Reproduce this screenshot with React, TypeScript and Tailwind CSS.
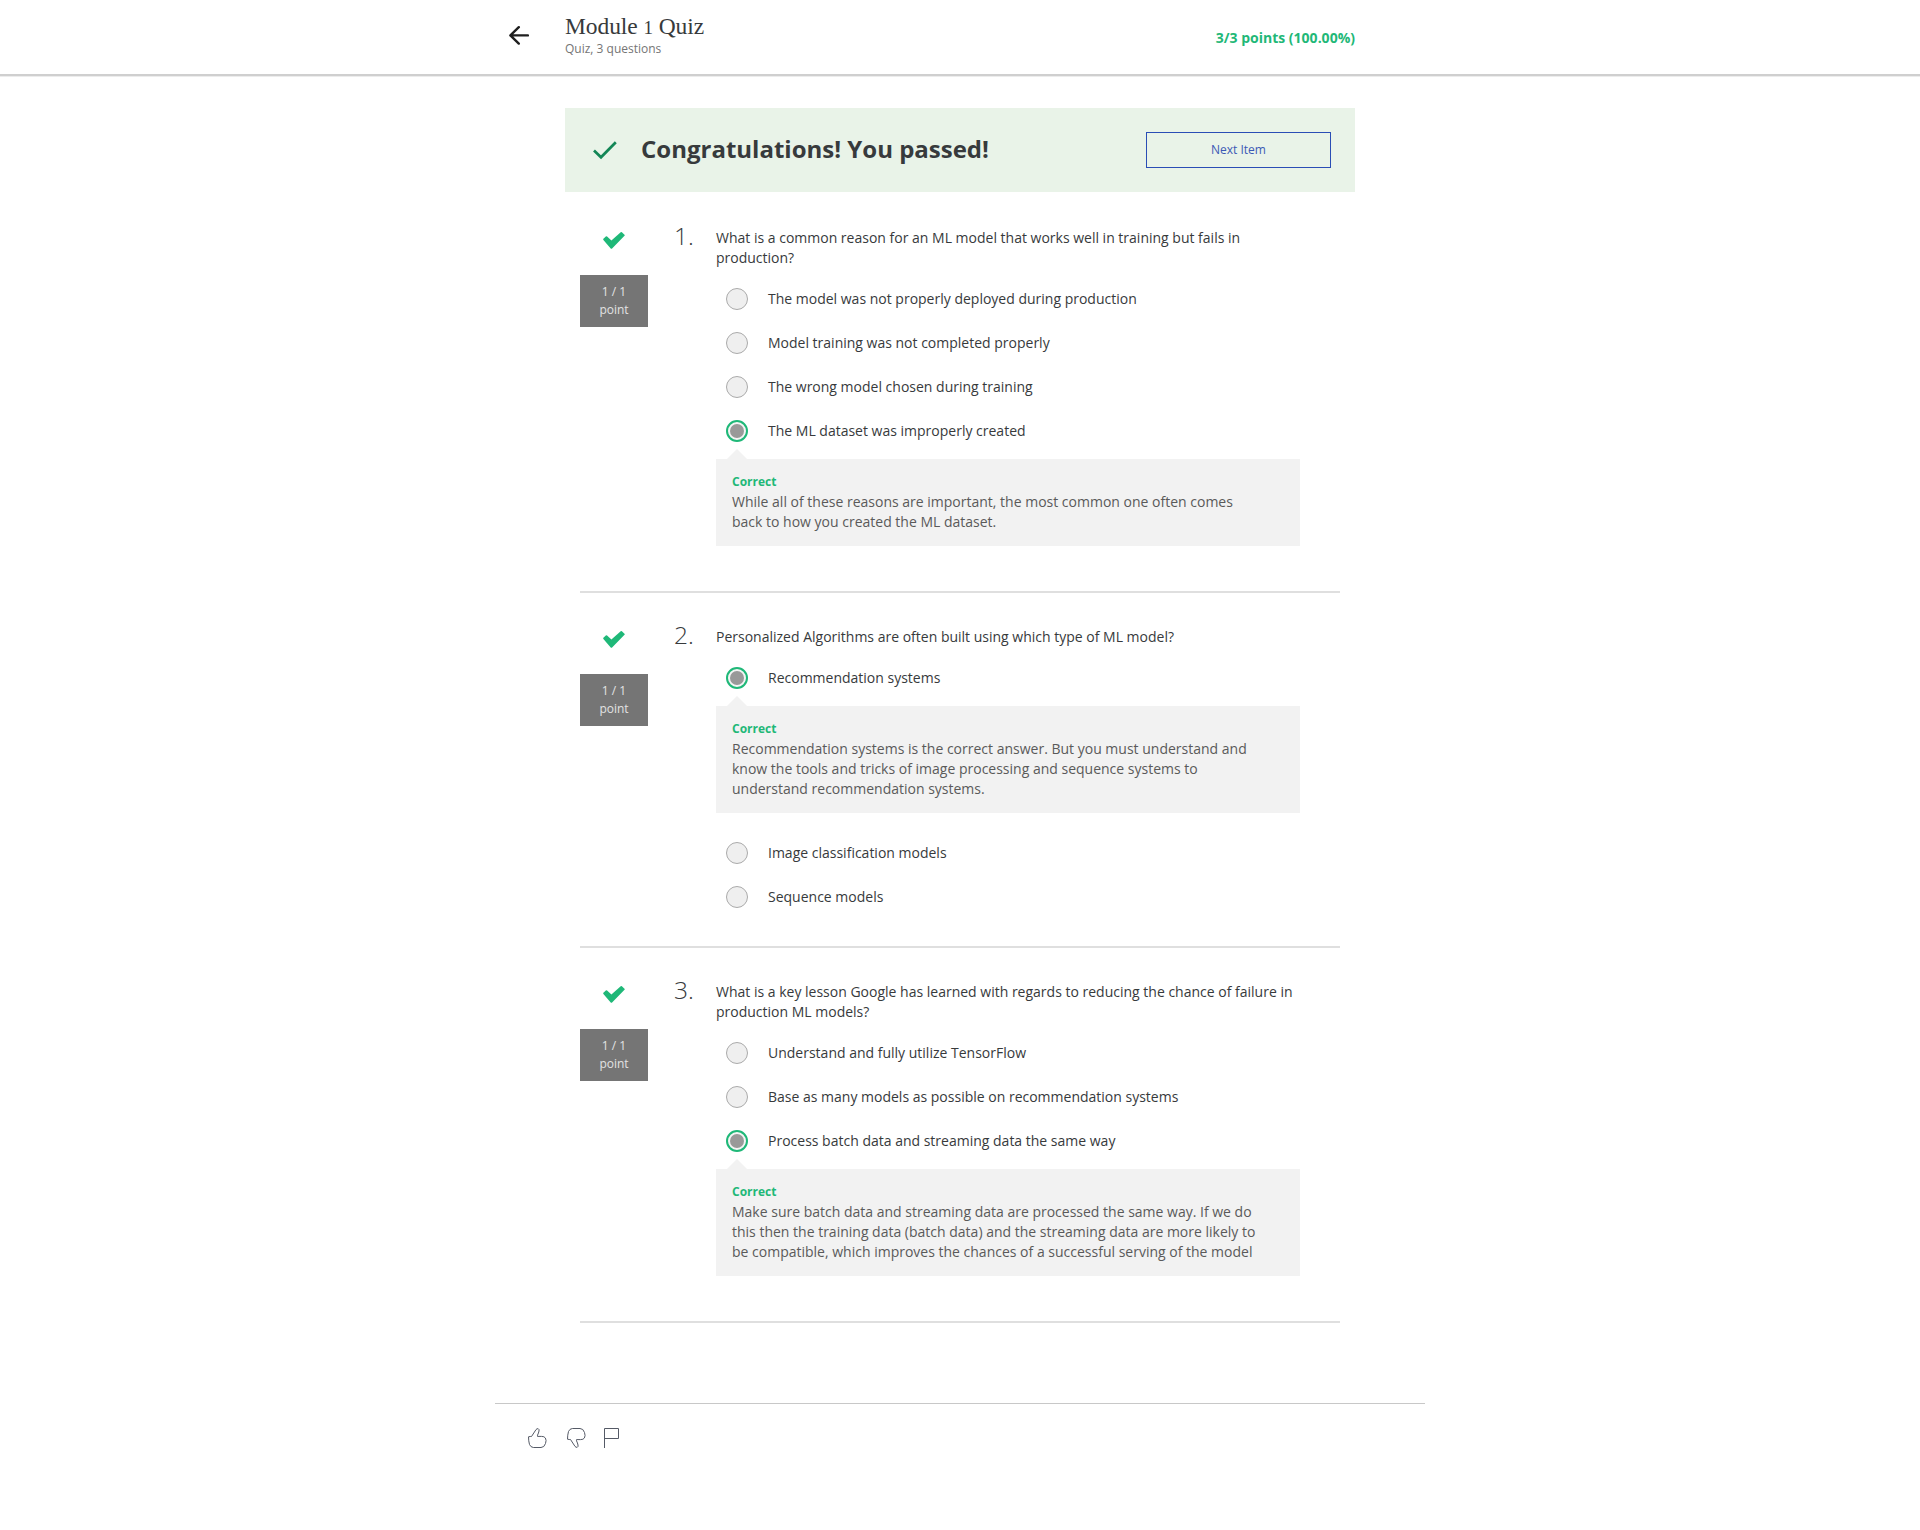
import React from "react";

type Option = { label: string; feedback?: string[] };
type Question = { prompt: string[]; options: Option[] };

const questions: Question[] = [
  {
    prompt: ["What is a common reason for an ML model that works well in training but fails in", "production?"],
    options: [
      { label: "The model was not properly deployed during production" },
      { label: "Model training was not completed properly" },
      { label: "The wrong model chosen during training" },
      {
        label: "The ML dataset was improperly created",
        feedback: [
          "While all of these reasons are important, the most common one often comes",
          "back to how you created the ML dataset.",
        ],
      },
    ],
  },
  {
    prompt: ["Personalized Algorithms are often built using which type of ML model?"],
    options: [
      {
        label: "Recommendation systems",
        feedback: [
          "Recommendation systems is the correct answer. But you must understand and",
          "know the tools and tricks of image processing and sequence systems to",
          "understand recommendation systems.",
        ],
      },
      { label: "Image classification models" },
      { label: "Sequence models" },
    ],
  },
  {
    prompt: [
      "What is a key lesson Google has learned with regards to reducing the chance of failure in",
      "production ML models?",
    ],
    options: [
      { label: "Understand and fully utilize TensorFlow" },
      { label: "Base as many models as possible on recommendation systems" },
      {
        label: "Process batch data and streaming data the same way",
        feedback: [
          "Make sure batch data and streaming data are processed the same way. If we do",
          "this then the training data (batch data) and the streaming data are more likely to",
          "be compatible, which improves the chances of a successful serving of the model",
        ],
      },
    ],
  },
];

function Lines({ lines }: { lines: string[] }) {
  return (
    <>
      {lines.map((line) => (
        <span key={line} className="block whitespace-nowrap">
          {line}
        </span>
      ))}
    </>
  );
}

function Radio({ selected }: { selected: boolean }) {
  if (!selected) {
    return <span className="size-[22px] shrink-0 rounded-full border border-[#aaa] bg-[#efefef]" />;
  }
  return (
    <span className="flex size-[22px] shrink-0 items-center justify-center rounded-full border-2 border-[#1fb878] bg-[#f4f4f4]">
      <span className="size-[14px] rounded-full bg-[#999]" />
    </span>
  );
}

function Feedback({ lines }: { lines: string[] }) {
  return (
    <div className="relative mt-1.5 mb-[18px] bg-[#f2f2f2] px-4 pt-[13px] pb-3.5">
      <svg className="absolute -top-[10px] left-[11px]" width="20" height="10" viewBox="0 0 20 10">
        <path d="M0 10L10 0L20 10Z" fill="#f2f2f2" />
      </svg>
      <p className="text-[12px] leading-5 font-bold text-[#1fb878]">Correct</p>
      <p className="text-[14px] leading-5 text-[#5a5a5a]">
        <Lines lines={lines} />
      </p>
    </div>
  );
}

function QuestionBlock({ question, number }: { question: Question; number: number }) {
  return (
    <section className="flex border-b-2 border-[#dfdfdf] pb-[27px]">
      <div className="flex w-[68px] shrink-0 flex-col items-center pt-[38px]">
        <svg width="22" height="17" viewBox="0 0 22 17.4" preserveAspectRatio="none">
          <path
            d="M0.4 8.1Q-.1 7.5 0.4 6.9L2.8 4.7Q3.5 4.1 4.1 4.7L8.4 8.8L17.7 0.3Q18.3-.2 18.9.3L21.5 2.7Q22.1 3.3 21.5 3.9L9.1 16.8Q8.4 17.5 7.7 16.8Z"
            fill="#1fb878"
          />
        </svg>
        <div className="mt-[26px] flex h-[52px] w-full flex-col justify-center bg-[#757575] text-center text-[12px] leading-[18px] text-[#e3e3e3]">
          <span>1 / 1</span>
          <span>point</span>
        </div>
      </div>
      <div className="w-[68px] shrink-0 pt-[24px] pl-[26px] text-[24.5px] leading-[36px] font-light text-[#373a3c]">
        {number}.
      </div>
      <div className="w-[584px] pt-[34px] text-[14px] leading-5 text-[#373a3c]">
        <p>
          <Lines lines={question.prompt} />
        </p>
        <div className="mt-[9px]">
          {question.options.map((option) => (
            <div key={option.label}>
              <div className="flex h-11 items-center gap-5 pl-2.5">
                <Radio selected={!!option.feedback} />
                <span>{option.label}</span>
              </div>
              {option.feedback && <Feedback lines={option.feedback} />}
            </div>
          ))}
        </div>
      </div>
    </section>
  );
}

export default function App() {
  return (
    <div className="min-h-[1530px] bg-white font-['Open_Sans',sans-serif] text-[#373a3c]">
      <header className="h-[77px] border-b border-[#ececec]">
        <div className="h-[76px] border-b-2 border-[#cfcfcf]">
          <div className="mx-auto flex w-[902px] pr-[56px]">
            <div className="w-[56px] shrink-0 pt-[26px]">
              <svg width="20" height="20" viewBox="0 0 20 20" fill="none" stroke="#1f1f1f" strokeWidth="2.4" strokeLinecap="round">
                <path d="M18.9 9.4H1.5M9.8 1.2L1.4 9.4L9.8 17.6" strokeLinejoin="round" />
              </svg>
            </div>
            <div className="flex-1 pt-3">
              <h1 className="h-[28px] font-['Liberation_Serif',serif] text-[23.5px] leading-[29px] tracking-[-0.08px]">
                Module <span className="text-[19px]">1</span> Quiz
              </h1>
              <p className="text-[12px] leading-[18px] text-[#757575]">Quiz, 3 questions</p>
            </div>
            <p className="pt-[28px] text-[14px] leading-5 font-bold text-[#1fb878]">3/3 points (100.00%)</p>
          </div>
        </div>
      </header>

      <div className="mx-auto mt-[31px] flex h-[84px] w-[790px] items-center bg-[#e9f3e8] pr-6 pl-7">
        <svg width="24" height="20" viewBox="0 0 24 20" fill="none">
          <path d="M1 10.6L8 17.3L22.8 2.2" stroke="#138656" strokeWidth="2.7" />
        </svg>
        <h2 className="ml-6 flex-1 pb-0.5 text-[24px] leading-[36px] font-bold">Congratulations! You passed!</h2>
        <button className="h-9 w-[185px] border border-[#2a4db5] text-[12px] text-[#3c59b5]">Next Item</button>
      </div>

      <main className="mx-auto mt-0.5 w-[760px]">
        {questions.map((question, index) => (
          <QuestionBlock key={question.prompt[0]} question={question} number={index + 1} />
        ))}
      </main>

      <footer className="mx-auto mt-20 flex w-[930px] border-t border-[#c8c8c8] pt-6 pl-[33px]">
        <svg width="19" height="20" viewBox="0 0 19 20" fill="none" stroke="#555a66" strokeWidth="1">
          <path d="M.5 8.8Q2.4 8.3 3.5 8.5L8 1.6Q9 .4 10.2.7Q11.4 1.3 11 3Q10.6 5 9.5 7.2V8.4H13.5Q16.3 8.3 17.4 10Q18.7 12.3 17.5 15.5Q16.3 19.5 13 19.5H5.3Q2.6 19.2 1.5 16.5Q.5 13 .5 8.8Z" />
        </svg>
        <svg className="ml-5" width="19" height="20" viewBox="0 0 19 20" fill="none" stroke="#555a66" strokeWidth="1">
          <path d="M.5 11.2Q2.4 11.7 3.5 11.5L8 18.4Q9 19.6 10.2 19.3Q11.4 18.7 11 17Q10.6 15 9.5 12.8V11.6H13.5Q16.3 11.7 17.4 10Q18.7 7.7 17.5 4.5Q16.3.5 13 .5H5.3Q2.6.8 1.5 3.5Q.5 7 .5 11.2Z" />
        </svg>
        <svg className="ml-[18px]" width="15" height="20" viewBox="0 0 15 20" fill="none" stroke="#555a66" strokeWidth="1">
          <path d="M.5 20V.5H14.5V10.5H.5" />
        </svg>
      </footer>
    </div>
  );
}
